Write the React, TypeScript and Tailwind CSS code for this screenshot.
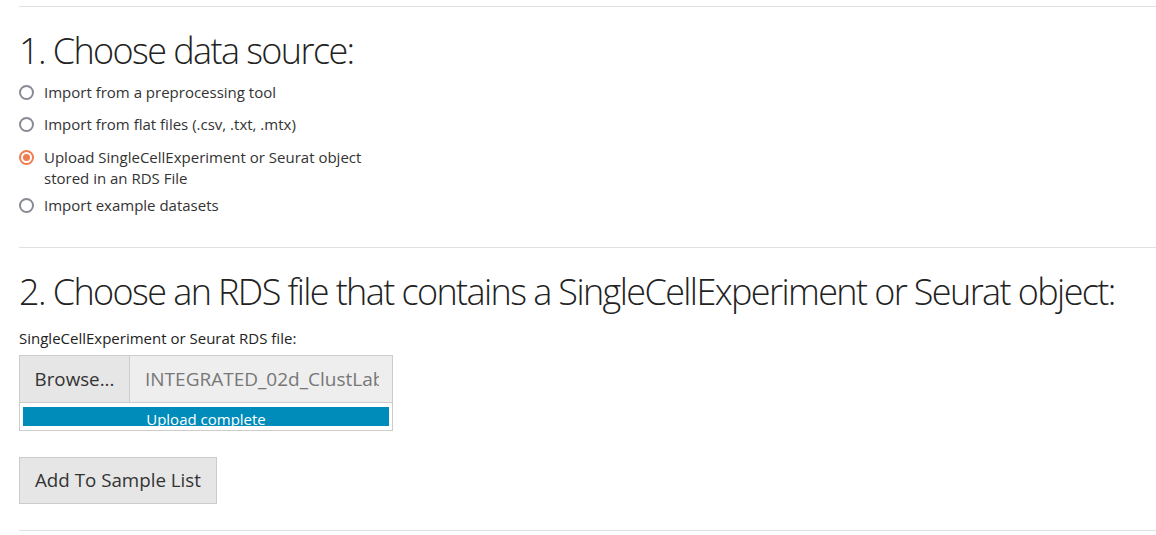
const font = { fontFamily: '"Open Sans", "Noto Sans", sans-serif' };

interface RadioProps {
  label: React.ReactNode;
  checked?: boolean;
  className?: string;
}

const Radio = ({ label, checked, className }: RadioProps) => {
  return (
    <label className={"flex items-start gap-[10px] text-[15px] leading-[21px] text-[#333] " + (className ?? "")}>
      {checked ? (
        <span className="mt-[3px] flex h-[15px] w-[15px] shrink-0 items-center justify-center rounded-full border-[2px] border-[#ef7d4f] bg-white">
          <span className="h-[7px] w-[7px] rounded-full bg-[#ef7d4f]"></span>
        </span>
      ) : (
        <span className="mt-[3px] h-[15px] w-[15px] shrink-0 rounded-full border-[2px] border-[#8a8a96] bg-white"></span>
      )}
      <span>{label}</span>
    </label>
  );
};

const App = () => {
  return (
    <div className="bg-white pl-[19px] pt-[6px]" style={font}>
      <hr className="border-t border-[#e0e0e0]" />

      <h3 className="mt-[24px] whitespace-nowrap text-[36px] font-light leading-[40px] tracking-[-1.6px] text-[#222]">
        1. Choose data source:
      </h3>
      <div className="mt-[11px] flex w-[345px] flex-col">
        <Radio label="Import from a preprocessing tool" />
        <Radio className="mt-[11px]" label="Import from flat files (.csv, .txt, .mtx)" />
        <Radio
          className="mt-[12px]"
          checked
          label="Upload SingleCellExperiment or Seurat object stored in an RDS File"
        />
        <Radio className="mt-[6px]" label="Import example datasets" />
      </div>

      <hr className="mt-[31px] border-t border-[#e0e0e0]" />

      <h3 className="mt-[24px] whitespace-nowrap text-[36px] font-light leading-[40px] tracking-[-1.6px] text-[#222]">
        2. Choose an RDS file that contains a SingleCellExperiment or Seurat object:
      </h3>
      <div className="mt-[16px] text-[15px] leading-[21px] text-[#222]">
        SingleCellExperiment or Seurat RDS file:
      </div>
      <div className="mt-[6px] w-[374px]">
        <div className="flex h-[48px]">
          <div className="flex w-[111px] items-center justify-center border border-[#ccc] bg-[#e6e6e6] text-[18.75px] text-[#333]">
            Browse...
          </div>
          <div className="flex flex-1 items-center overflow-hidden whitespace-nowrap border border-l-0 border-[#ccc] bg-[#eee] pl-[15px] text-[19px] text-[#777]">
            <span className="block w-[234px] overflow-hidden">INTEGRATED_02d_ClustLabels_final.rds</span>
          </div>
        </div>
        <div className="border border-t-0 border-[#ccc] px-[3px] pb-[4px] pt-[4px]">
          <div className="h-[19px] overflow-hidden bg-[#008cba] text-center text-[15px] leading-[25px] text-white">
            Upload complete
          </div>
        </div>
      </div>

      <button className="mt-[26px] h-[47px] border border-[#ccc] bg-[#e6e6e6] px-[15px] text-[18.75px] text-[#333]">
        Add To Sample List
      </button>

      <hr className="mt-[26px] border-t border-[#e0e0e0]" />
    </div>
  );
};

export default App;
